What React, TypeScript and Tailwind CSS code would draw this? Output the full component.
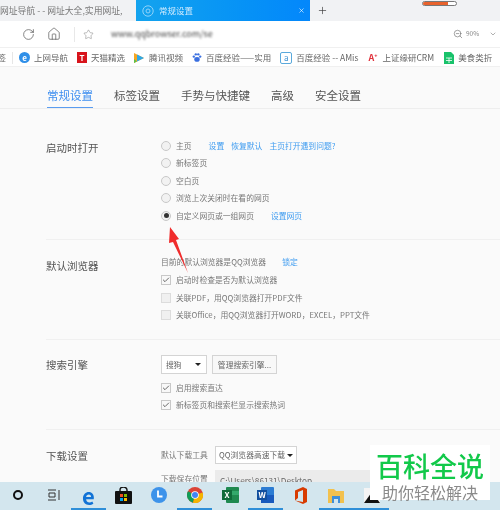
import { ChevronDown, Home, Plus, RotateCw, Star, X, ZoomOut, Check } from 'lucide-react'
import type { ReactNode } from 'react'

const font = "font-['Noto_Sans_CJK_SC','Noto_Sans',sans-serif]"

function Bookmark({ icon, label, className }: { icon: ReactNode; label: string; className?: string }) {
  return (
    <div className={`flex items-center gap-[4px] ${className ?? ''}`}>
      {icon}
      <span className="whitespace-nowrap text-[8.5px] text-[#666]">{label}</span>
    </div>
  )
}

function Radio({ checked, label, extra }: { checked?: boolean; label: string; extra?: ReactNode }) {
  return (
    <div className="flex h-[17.5px] items-center">
      <span className="flex h-[10px] w-[10px] shrink-0 items-center justify-center rounded-full border border-[#c8c8c8] bg-[#f2f2f2]">
        {checked && <span className="h-[5px] w-[5px] rounded-full bg-[#333]" />}
      </span>
      <span className="ml-[5px] whitespace-nowrap text-[7.8px] text-[#777]">{label}</span>
      {extra}
    </div>
  )
}

function Checkbox({ checked, label }: { checked?: boolean; label: string }) {
  return (
    <div className="flex h-[17.5px] items-center">
      <span className={`flex h-[10px] w-[10px] shrink-0 items-center justify-center border ${checked ? 'border-[#c8c8c8] bg-[#f8f8f8]' : 'border-[#dcdcdc] bg-[#f0f0f0]'}`}>
        {checked && <Check size={8} strokeWidth={2.2} className="text-[#333]" />}
      </span>
      <span className="ml-[5px] whitespace-nowrap text-[7.8px] text-[#777]">{label}</span>
    </div>
  )
}

function Section({ title, children, className, labelClassName }: { title: string; children: ReactNode; className?: string; labelClassName?: string }) {
  return (
    <section className={`flex border-b border-[#f0f0f0] ${className ?? ''}`}>
      <h2 className={`w-[115px] shrink-0 text-[10.5px] leading-[14px] text-[#555] ${labelClassName ?? 'mt-[3px]'}`}>{title}</h2>
      <div className="min-w-0 flex-1">{children}</div>
    </section>
  )
}

function Link({ children, className }: { children: ReactNode; className?: string }) {
  return <span className={`whitespace-nowrap text-[7.8px] text-[#3f9cf0] ${className ?? ''}`}>{children}</span>
}

function ChromeIcon() {
  return (
    <svg width="16" height="16" viewBox="0 0 16 16">
      <circle cx="8" cy="8" r="8" fill="#db4437" />
      <path d="M8 8 1 4.2A8 8 0 0 0 6 15.8Z" fill="#0f9d58" />
      <path d="M8 8 6 15.8A8 8 0 0 0 15.6 5.5Z" fill="#f4b400" />
      <circle cx="8" cy="8" r="3.8" fill="#fff" />
      <circle cx="8" cy="8" r="3" fill="#4285f4" />
    </svg>
  )
}

function TaskSlot({ children, active }: { children: ReactNode; active?: boolean }) {
  return (
    <div className={`flex h-full w-[35.4px] shrink-0 items-center justify-center border-b-2 ${active ? 'border-[#2f8fd8]' : 'border-transparent'}`}>
      {children}
    </div>
  )
}

export default function App() {
  return (
    <div className={`relative flex h-[510px] w-[500px] flex-col overflow-hidden bg-[#fafafa] blur-[0.4px] ${font}`}>
      {/* tab strip */}
      <div className="flex h-[21px] shrink-0 items-center bg-[#f1f2f4]">
        <div className="w-[136px] overflow-hidden whitespace-nowrap text-[8.8px] text-[#777]">网址导航 -  - 网址大全,实用网址,</div>
        <div className="flex h-full w-[174px] items-center bg-gradient-to-r from-[#14a3ee] to-[#0487fb] pl-[6px] pr-[5px]">
          <svg width="12" height="12" viewBox="0 0 12 12" fill="none" stroke="#8fd3fa" strokeWidth="1">
            <circle cx="6" cy="6" r="5.2" />
            <circle cx="6" cy="6" r="2" />
          </svg>
          <span className="ml-[5px] flex-1 text-[8.5px] text-[#cfeafd]">常规设置</span>
          <X size={7} className="text-white" />
        </div>
        <Plus size={11} strokeWidth={1.4} className="ml-[7px] text-[#333]" />
        <div className="mb-[15px] ml-[94px] flex h-[5px] w-[35px] items-center overflow-hidden rounded-full border border-[#777] bg-white">
          <div className="h-full w-[25px] bg-[#e8622c]" />
        </div>
      </div>

      {/* toolbar */}
      <div className="flex h-[26px] shrink-0 items-center bg-white text-[#555]">
        <RotateCw size={13} strokeWidth={1.3} className="ml-[22px]" />
        <Home size={14} strokeWidth={1.2} className="ml-[12px]" />
        <div className="ml-[13px] h-[15px] w-px bg-[#e8e8e8]" />
        <Star size={11} strokeWidth={1.2} className="ml-[8px] text-[#888]" />
        <span className="ml-[17px] w-[102px] overflow-hidden whitespace-nowrap text-[9px] text-[#444] blur-[1.2px]">www.qqbrowser.com/settings</span>
        <ZoomOut size={10} strokeWidth={1.3} className="ml-[240px] shrink-0" />
        <span className="ml-[3px] text-[6.5px] text-[#888]">90%</span>
        <ChevronDown size={8} className="ml-[10px] shrink-0 text-[#888]" />
      </div>

      {/* bookmarks */}
      <div className="flex h-[20px] shrink-0 items-center border-y border-[#f0f0f0] bg-white pt-px">
        <span className="w-[12px] shrink-0 overflow-hidden text-right text-[8.5px] leading-none text-[#666]"><span className="relative -left-[6px]">签</span></span>
        <div className="h-[12px] w-px bg-[#e6e6e6]" />
        <Bookmark
          className="ml-[6px]"
          label="上网导航"
          icon={<span className="flex h-[11px] w-[11px] items-center justify-center rounded-full bg-[#2f8fe8] text-[8px] font-bold leading-none text-white">e</span>}
        />
        <Bookmark
          className="ml-[9px]"
          label="天猫精选"
          icon={<span className="flex h-[11px] w-[10px] items-center justify-center bg-[#d8141c] text-[8px] font-bold leading-none text-white">T</span>}
        />
        <Bookmark
          className="ml-[8px]"
          label="腾讯视频"
          icon={
            <svg width="12" height="12" viewBox="0 0 12 12">
              <path d="M1 1 11 6 1 11Z" fill="#f5a623" />
              <path d="M4 2.5 11 6 4 9.5Z" fill="#2fa8e8" />
              <path d="M1 7 4 9.5 1 11Z" fill="#5cc04a" />
            </svg>
          }
        />
        <Bookmark
          className="ml-[9px]"
          label="百度经验——实用"
          icon={
            <svg width="10" height="11" viewBox="0 0 11 11" fill="#3a6fe0">
              <circle cx="2" cy="4.5" r="1.3" />
              <circle cx="4.2" cy="2" r="1.3" />
              <circle cx="6.9" cy="2" r="1.3" />
              <circle cx="9" cy="4.5" r="1.3" />
              <ellipse cx="5.5" cy="7.6" rx="3" ry="2.6" />
            </svg>
          }
        />
        <Bookmark
          className="ml-[9px]"
          label="百度经验 -- AMis"
          icon={<span className="flex h-[12px] w-[12px] items-center justify-center rounded-[2px] border border-[#5aa9dc] text-[8px] leading-none text-[#3a8fd0]">a</span>}
        />
        <Bookmark
          className="ml-[10px]"
          label="上证缘研CRM"
          icon={<span className="w-[10px] text-[9px] font-bold leading-none text-[#e0323c]">A⁺</span>}
        />
        <Bookmark
          className="ml-[10px]"
          label="美食类折"
          icon={
            <svg width="10" height="12" viewBox="0 0 10 12" className="shrink-0">
              <path d="M0 0H7L10 3V12H0Z" fill="#19c26b" />
              <path d="M2 6H8M2 8.5H8M5 6V11" stroke="#fff" strokeWidth="0.8" />
            </svg>
          }
        />
      </div>

      {/* settings page */}
      <div className="min-h-0 flex-1 overflow-hidden">
        <nav className="flex h-[42px] items-end gap-[21px] border-b border-[#eeeeee] pl-[47px] text-[11.5px] text-[#555]">
          <span className="border-b-[1.5px] border-[#5a9cf0] pb-[3px] leading-[17px] text-[#3f8ff0]">常规设置</span>
          <span className="pb-[4px] leading-[17px]">标签设置</span>
          <span className="pb-[4px] leading-[17px]">手势与快捷键</span>
          <span className="pb-[4px] leading-[17px]">高级</span>
          <span className="pb-[4px] leading-[17px]">安全设置</span>
        </nav>

        <div className="pl-[46px]">
          <Section title="启动时打开" className="h-[131px] pt-[29px]">
            <div className="mt-[-1px]">
              <Radio
                label="主页"
                extra={
                  <>
                    <Link className="ml-[17px]">设置</Link>
                    <Link className="ml-[7px]">恢复默认</Link>
                    <Link className="ml-[7px]">主页打开遇到问题?</Link>
                  </>
                }
              />
              <Radio label="新标签页" />
              <Radio label="空白页" />
              <Radio label="浏览上次关闭时在看的网页" />
              <Radio checked label="自定义网页或一组网页" extra={<Link className="ml-[17px]">设置网页</Link>} />
            </div>
          </Section>

          <Section title="默认浏览器" className="h-[100px] pt-[13px]" labelClassName="mt-[6px]">
            <div className="flex h-[18.5px] items-center text-[7.8px] text-[#777]">
              <span>目前的默认浏览器是QQ浏览器</span>
              <Link className="ml-[16px]">锁定</Link>
            </div>
            <Checkbox checked label="启动时检查是否为默认浏览器" />
            <Checkbox label={'关联PDF\uFF0C用QQ浏览器打开PDF文件'} />
            <Checkbox label={'关联Office\uFF0C用QQ浏览器打开WORD\uFF0CEXCEL\uFF0CPPT文件'} />
          </Section>

          <Section title="搜索引擎" className="h-[90px] pt-[15px]">
            <div className="flex gap-[5px]">
              <div className="flex h-[19px] w-[46px] items-center justify-between border border-[#d4d4d4] bg-white pl-[4px] pr-[5px] text-[7.8px] text-[#666]">
                搜狗
                <span className="h-0 w-0 border-x-[3px] border-t-[3px] border-x-transparent border-t-[#222]" />
              </div>
              <div className="flex h-[19px] w-[65px] items-center justify-center border border-[#d4d4d4] bg-[#f8f8f8] text-[7.8px] text-[#666]">管理搜索引擎...</div>
            </div>
            <div className="mt-[5px]">
              <Checkbox checked label="启用搜索直达" />
              <Checkbox checked label="新标签页和搜索栏显示搜索热词" />
            </div>
          </Section>

          <section className="flex pt-[16px]">
            <h2 className="mt-[3px] w-[115px] shrink-0 text-[10.5px] leading-[14px] text-[#555]">下载设置</h2>
            <div className="flex-1">
              <div className="flex items-center">
                <span className="w-[54px] text-[7.8px] text-[#777]">默认下载工具</span>
                <div className="flex h-[18px] w-[82px] items-center justify-between whitespace-nowrap border border-[#d4d4d4] bg-white pl-[3px] pr-[3px] text-[7.8px] text-[#666]">
                  QQ浏览器高速下载
                  <span className="h-0 w-0 border-x-[3px] border-t-[3px] border-x-transparent border-t-[#222]" />
                </div>
              </div>
              <div className="mt-[6px] flex items-start">
                <span className="w-[54px] pt-[3px] text-[7.8px] text-[#777]">下载保存位置</span>
                <div className="h-[20px] w-[172px] bg-[#ebebeb] pl-[5px] pt-[4px] text-[8.2px] text-[#666]">C:\Users\86131\Desktop</div>
              </div>
            </div>
          </section>
        </div>
      </div>

      {/* taskbar */}
      <div className="flex h-[28px] shrink-0 items-center bg-[#d3e6ee]">
        <TaskSlot>
          <span className="h-[10px] w-[10px] rounded-full border-2 border-[#111]" />
        </TaskSlot>
        <TaskSlot>
          <svg width="13" height="12" viewBox="0 0 13 12" fill="none" stroke="#333" strokeWidth="1">
            <path d="M1 1H9M1 11H9M2 4H8V8H2ZM12 1V11" />
          </svg>
        </TaskSlot>
        <TaskSlot active>
          <span className="text-[22px] font-bold leading-none text-[#1273d6]">e</span>
        </TaskSlot>
        <TaskSlot>
          <svg width="17" height="17" viewBox="0 0 17 17">
            <path d="M5 5V3A3.5 3 0 0 1 12 3V5" fill="none" stroke="#111" strokeWidth="1.4" />
            <rect y="4" width="17" height="13" rx="1" fill="#111" />
            <rect x="5" y="7" width="3" height="3" fill="#f25022" />
            <rect x="9" y="7" width="3" height="3" fill="#7fba00" />
            <rect x="5" y="11" width="3" height="3" fill="#00a4ef" />
            <rect x="9" y="11" width="3" height="3" fill="#ffb900" />
          </svg>
        </TaskSlot>
        <TaskSlot>
          <svg width="16" height="16" viewBox="0 0 16 16">
            <circle cx="8" cy="8" r="8" fill="#3d93ea" />
            <path d="M7 3.5V9.5H11.5" fill="none" stroke="#fff" strokeWidth="1.8" />
          </svg>
        </TaskSlot>
        <TaskSlot active>
          <ChromeIcon />
        </TaskSlot>
        <TaskSlot>
          <svg width="17" height="16" viewBox="0 0 17 16">
            <rect x="4" width="13" height="16" rx="1" fill="#1f8a50" />
            <rect x="10" y="4" width="7" height="4" fill="#33a96c" />
            <rect y="3" width="10" height="10" fill="#0f6b3a" />
            <text x="2.5" y="11" fontSize="8" fontWeight="700" fill="#fff">X</text>
          </svg>
        </TaskSlot>
        <TaskSlot active>
          <svg width="17" height="16" viewBox="0 0 17 16">
            <rect x="4" width="13" height="16" rx="1" fill="#2b7cd3" />
            <rect x="4" y="8" width="13" height="8" fill="#185abd" />
            <rect y="3" width="10" height="10" fill="#124f9e" />
            <text x="1.5" y="11" fontSize="8" fontWeight="700" fill="#fff">W</text>
          </svg>
        </TaskSlot>
        <TaskSlot>
          <svg width="14" height="17" viewBox="0 0 14 17">
            <path d="M1 3.5 9 0 13 2V15L9 17 1 13.5 9 15V3L4 5V11L1 13.5Z" fill="#d83b01" />
          </svg>
        </TaskSlot>
        <TaskSlot active>
          <svg width="16" height="15" viewBox="0 0 16 15">
            <path d="M0 1H6L8 3H16V15H0Z" fill="#f2c14e" />
            <rect x="4" y="8" width="8" height="7" fill="#3f8fd8" />
            <rect x="6" y="11" width="4" height="4" fill="#d3e6ee" />
          </svg>
        </TaskSlot>
        <TaskSlot active>
          <svg width="16" height="15" viewBox="0 0 16 15">
            <rect width="16" height="15" fill="#f4f4f4" />
            <path d="M0 15 8 4 16 15Z" fill="#111" />
          </svg>
        </TaskSlot>
      </div>

      {/* red arrow added on the screenshot */}
      <svg className="absolute left-[160px] top-[220px]" width="40" height="60" viewBox="0 0 40 60">
        <path d="M10 7 19 19 16 20 28 53 13 22 9 23Z" fill="#f02c2c" />
      </svg>

      {/* watermark */}
      <div className="absolute left-[370px] top-[445px] flex h-[55px] w-[120px] flex-col items-center bg-white pt-[4px]">
        <span className="text-[27px] font-medium leading-[34px] text-[#12c94a]">百科全说</span>
        <span className="text-[16px] leading-[18px] text-[#8a8a8a]">助你轻松解决</span>
      </div>
    </div>
  )
}
